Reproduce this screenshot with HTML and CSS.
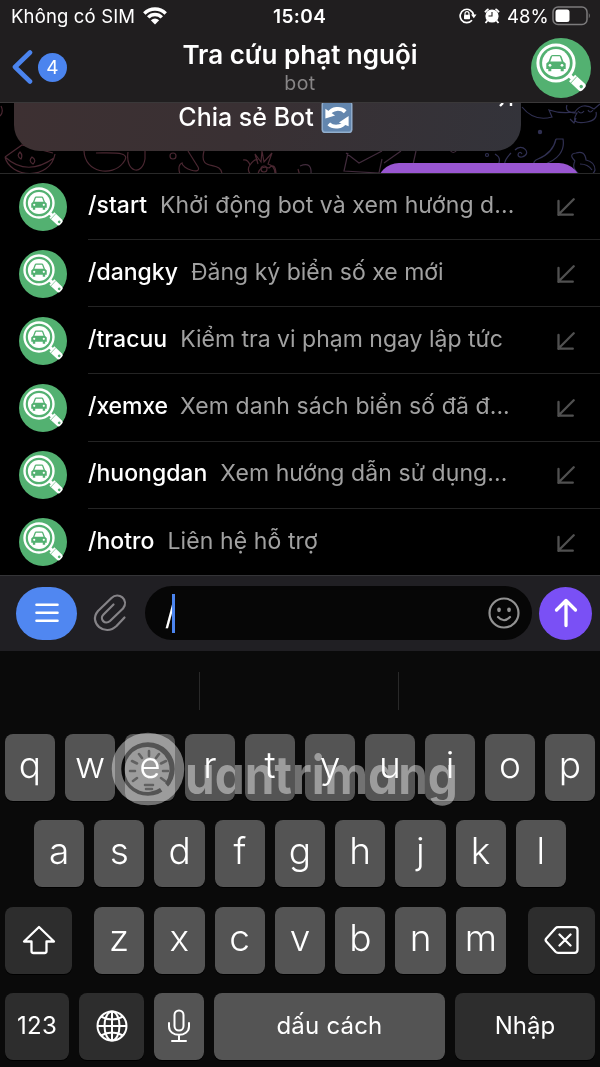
FILE: index.html
```html
<!DOCTYPE html>
<html lang="vi">
<head>
<meta charset="utf-8">
<title>Tra cứu phạt nguội</title>
<link rel="stylesheet" href="styles.css">
</head>
<body>
<svg class="defs" aria-hidden="true">
  <symbol id="logo" viewBox="0 0 60 60">
    <circle cx="30" cy="30" r="30" fill="#53b171"/>
    <g transform="rotate(43 25 25)">
      <rect x="43" y="23" width="6" height="4" fill="#fff"/>
      <path d="M47 20.500h13q3 0 3 3v3q0 3-3 3H47z" fill="#fff"/>
      <path d="M49.500 20.500v9" stroke="#53b171" stroke-width=".7"/>
      <circle cx="59.500" cy="25" r="1.700" fill="#53b171"/>
    </g>
    <circle cx="25" cy="25" r="18.100" fill="none" stroke="#fff" stroke-width="3"/>
    <circle cx="25" cy="25" r="13.900" fill="#fff"/>
    <path d="M15.300 25.500l2.300-2 1.900-5q.5-1.600 2-1.600h7q1.500 0 2 1.600l1.900 5 2.300 2v5.500h-2v2.300h-3V31h-9.400v2.300h-3V31h-2z" fill="#53b171"/>
    <path d="M19.300 23.500l1.900-5.200h7.600l1.900 5.200z" fill="#fff"/>
    <circle cx="19" cy="27.300" r="1.400" fill="#fff"/><circle cx="31" cy="27.300" r="1.400" fill="#fff"/>
  </symbol>
  <symbol id="insert" viewBox="0 0 18 18">
    <path d="M16.700 1.300L2 16M1.500 3v14M1.300 16.700h14.500" fill="none" stroke="#505050" stroke-width="2.300" stroke-linecap="round"/>
  </symbol>
</svg>

<header class="top">
  <div class="status">
    <span class="carrier">Không có SIM</span>
    <svg class="wifi" viewBox="0 0 24 18"><g fill="none" stroke="#fff" stroke-width="3.400"><path d="M1.300 6.500C7.300.5 16.700.5 22.700 6.500"/><path d="M5.200 10.400c3.800-3.800 9.800-3.800 13.600 0"/></g><path d="M7.800 13.200q4.200-3.200 8.400 0L12 17.500z" fill="#fff"/></svg>
    <span class="clock">15:04</span>
    <svg class="lock" viewBox="0 0 18 16"><g fill="none" stroke="#fff"><path d="M14.500 7A6.700 6.700 0 1 0 13 12.300" stroke-width="1.700"/><path d="M6 7V5.700a2 2 0 0 1 4 0V7" stroke-width="1.200"/></g><rect x="5" y="6.800" width="6" height="4.500" rx=".7" fill="#fff"/><path d="M12 6.500h5.500l-2.700 3.700z" fill="#fff"/></svg>
    <svg class="alarm" viewBox="0 0 16 16"><circle cx="8" cy="8" r="6.600" fill="#fff"/><path d="M3.500 12.500l-2 2.500M12.500 12.500l2 2.500M1 4.200A12 12 0 0 1 4.500 1M15 4.200A12 12 0 0 0 11.500 1" stroke="#fff" stroke-width="1.800" fill="none"/><path d="M8 4v4H4.500" stroke="#201e1f" stroke-width="1.100" fill="none"/></svg>
    <span class="percent">48%</span>
    <svg class="battery" viewBox="0 0 39 20"><rect x="1" y="1" width="34" height="17.500" rx="5" fill="none" stroke="#7c7b7c" stroke-width="1.500"/><rect x="3.500" y="3.500" width="14" height="12.500" rx="2.500" fill="#fff"/><path d="M36.800 7q2 2.700 0 5.500z" fill="#7c7b7c"/></svg>
  </div>
  <div class="nav">
    <svg class="back" viewBox="0 0 20 34"><path d="M17.500 2.500L2.500 17l15 14.500" fill="none" stroke="#4b84ee" stroke-width="4.600" stroke-linecap="round" stroke-linejoin="round"/></svg>
    <span class="count">4</span>
    <div class="heading">
      <h1>Tra cứu phạt nguội</h1>
      <p>bot</p>
    </div>
    <svg class="avatar-lg"><use href="#logo"/></svg>
  </div>
</header>

<section class="chat">
  <svg class="doodles" viewBox="0 0 600 70" fill="none" stroke-width="1.200">
    <g stroke="#4a2731">
      <path d="M0 13q4-4 1-10M5 54l17-12 31 8M5 54c5 21 45 24 50-3M5 54q22 20 49 1M20 49q3 3 1 7-5-3-1-7zM32 54q5 3 1 7-5-3-1-7zM84 48c1 22 28 26 39 12 10-12-10-10-27-10M128 49c-3 20 14 25 17 7v-9M188 48l10 16c4 8-16 2-16-4-4 2-3 8-2 11M204 48c-6 22 18 8 18 24M243 57q5-1 7 5 5-7 8-5M250 62q-4 5 2 11M258 61l-3-10 6 8 1-11 2 11 8-9-4 11q7 2 7 10M258 71q2-9 11-6 6-6 7 5M298 66l2 7"/>
      <circle cx="173" cy="53" r="3"/><circle cx="264" cy="66" r="3"/>
    </g>
    <g stroke="#412b3c"><path d="M300 63q12-5 11 8M348 50l-4 18 35 2 3-14M346 50l13 10 23-12M384 60l17-12M412 66l4-18M450 47q3 5 7 0"/></g>
    <g stroke="#303052">
      <path d="M522 4q12 15 30 10l-3-7q12 4 25 2M567 2q-3 8 10 8-8 12 10 9 11-2 9-10M574 10q8-12 20-4l6-5M578 8q3 4 6 0M588 7q2 4 5 0M570 16l4 4 2-5M515 47c7-8 18 4 7 7-7 1-3-8 0-3M556 36q-3 14-18 20c-8 3-3 10 4 6 17-5 23-15 21-26h-7M575 58q-7-7 1-8 9-3 10 7 9 2 9 10-3 9-16 4-8-6-4-13M580 61q8 0 12 6M495 51q7 4 3 11 8 6 9 8M511 50q-12 12-2 20"/>
      <circle cx="540" cy="29" r="1.600" fill="#303052"/><circle cx="487" cy="52" r="1.500"/>
    </g>
  </svg>
  <div class="share">Chia sẻ Bot
    <svg viewBox="0 0 32 32"><rect y="-2" width="32" height="33" rx="4" fill="#91aecd"/><rect x="1.500" y="-1" width="29" height="30.500" rx="3" fill="#6386ae"/><path d="M7.500 11a10.500 9 0 0 1 17-2M24.500 19.500a10.500 9 0 0 1-17 2" fill="none" stroke="#fff" stroke-width="4"/><path d="M4 6v10l10-3zM28 13.500v10.500l-10-4z" fill="#fff"/></svg>
    <svg class="open" viewBox="0 0 14 5"><path d="M4 0L1 3M12 0v3" stroke="#fff" stroke-width="2.400"/></svg>
  </div>
  <div class="bubble"></div>
</section>

<ul class="commands">
  <li><svg class="avatar"><use href="#logo"/></svg><div class="row"><b>/start</b><span class="s1">Khởi động bot và xem hướng d...</span><svg class="arrow"><use href="#insert"/></svg></div></li>
  <li><svg class="avatar"><use href="#logo"/></svg><div class="row"><b>/dangky</b><span>Đăng ký biển số xe mới</span><svg class="arrow"><use href="#insert"/></svg></div></li>
  <li><svg class="avatar"><use href="#logo"/></svg><div class="row"><b>/tracuu</b><span>Kiểm tra vi phạm ngay lập tức</span><svg class="arrow"><use href="#insert"/></svg></div></li>
  <li><svg class="avatar"><use href="#logo"/></svg><div class="row"><b class="tight">/xemxe</b><span class="s4">Xem danh sách biển số đã đ...</span><svg class="arrow"><use href="#insert"/></svg></div></li>
  <li><svg class="avatar"><use href="#logo"/></svg><div class="row"><b>/huongdan</b><span class="s1">Xem hướng dẫn sử dụng...</span><svg class="arrow"><use href="#insert"/></svg></div></li>
  <li><svg class="avatar"><use href="#logo"/></svg><div class="row"><b>/hotro</b><span class="s4">Liên hệ hỗ trợ</span><svg class="arrow"><use href="#insert"/></svg></div></li>
</ul>

<section class="composer">
  <div class="menu"><svg viewBox="0 0 24 20"><path d="M1.500 1.700h21M1.500 9.700h21M1.500 17.700h21" stroke="#fff" stroke-width="2.600" stroke-linecap="round"/></svg></div>
  <svg class="clip" viewBox="0 0 34 38"><path d="M31.500 23.500L23.500 32C12 43-5 29 5 17L18.500 4c7-7 18 2 11.500 10.500L17 27c-5 4.500-11-2-6.500-6.500L20.500 10.500" fill="none" stroke="#858387" stroke-width="2.200" stroke-linecap="round" stroke-linejoin="round"/></svg>
  <div class="field"><span class="typed">/</span><i class="caret"></i>
    <svg class="smile" viewBox="0 0 32 32"><g fill="none" stroke="#929292" stroke-width="2.200" stroke-linecap="round"><circle cx="16" cy="16" r="14.500"/><path d="M10 20q6 6.500 12 0"/></g><ellipse cx="11" cy="12.800" rx="1.900" ry="2.400" fill="#929292"/><ellipse cx="21" cy="12.800" rx="1.900" ry="2.400" fill="#929292"/></svg>
  </div>
  <div class="send"><svg viewBox="0 0 24 30"><path d="M12 27.500V2.500M2.500 12L12 2.500l9.500 9.500" fill="none" stroke="#fff" stroke-width="3.300" stroke-linecap="round" stroke-linejoin="round"/></svg></div>
</section>

<section class="keyboard">
  <div class="suggest"><i></i><i></i><i></i></div>
  <div class="keys">
    <div class="line"><kbd>q</kbd><kbd>w</kbd><kbd>e</kbd><kbd>r</kbd><kbd>t</kbd><kbd>y</kbd><kbd>u</kbd><kbd>i</kbd><kbd>o</kbd><kbd>p</kbd></div>
    <div class="line mid"><kbd>a</kbd><kbd>s</kbd><kbd>d</kbd><kbd>f</kbd><kbd>g</kbd><kbd>h</kbd><kbd>j</kbd><kbd>k</kbd><kbd>l</kbd></div>
    <div class="line low">
      <kbd class="dark"><svg width="34" height="30" viewBox="0 0 34 30"><path d="M17 2L2 16.500h7.500V26q0 2 2 2h11q2 0 2-2v-9.500H32z" fill="none" stroke="#fff" stroke-width="2.300" stroke-linejoin="round"/></svg></kbd>
      <div class="letters"><kbd>z</kbd><kbd>x</kbd><kbd>c</kbd><kbd>v</kbd><kbd>b</kbd><kbd>n</kbd><kbd>m</kbd></div>
      <kbd class="dark"><svg width="35" height="30" viewBox="0 0 35 30"><path d="M14 2.200h16.500q3 0 3 3v19.600q0 3-3 3H14q-1.500 0-2.500-1L2.300 16.500q-1.300-1.500 0-3l9.200-10.300q1-1 2.500-1zM15.500 9.500l11 11M26.500 9.500l-11 11" fill="none" stroke="#fff" stroke-width="2.300" stroke-linecap="round"/></svg></kbd>
    </div>
    <div class="line bottom">
      <kbd class="dark word num">123</kbd>
      <kbd class="dark"><svg width="32" height="32" viewBox="0 0 32 32" fill="none" stroke="#fff" stroke-width="2"><circle cx="16" cy="16" r="14.500"/><ellipse cx="16" cy="16" rx="7.500" ry="14.500"/><path d="M16 1.500v29M1.500 16h29M5 6.500q11 6 22 0M5 25.500q11-6 22 0"/></svg></kbd>
      <kbd><svg width="24" height="34" viewBox="0 0 24 34" fill="none" stroke="#fff" stroke-width="2" stroke-linecap="round"><rect x="7.500" y="1.500" width="9" height="20" rx="4.500"/><path d="M2 14v3.500c0 11 20 11 20 0V14M12 26v6M5 32h14"/></svg></kbd>
      <kbd class="word space">dấu cách</kbd>
      <kbd class="dark word enter">Nhập</kbd>
    </div>
  </div>
  <svg class="watermark" viewBox="0 0 360 90">
    <circle cx="38" cy="42" r="31.500" fill="none" stroke="#6c6c6c" stroke-width="9.500"/>
    <path d="M38 20a22.500 22.500 0 1 0 12 41q2 4 5 6l5-5-5-6A22.500 22.500 0 0 0 38 20z" fill="#6c6c6c"/>
    <g stroke="#141414" stroke-width="2.600" stroke-linecap="round"><path d="M39 24v5M29 27l3 4M49 27l-3 4M22 34l5 2.500M56 34l-5 2.500M20 44h5M58 44h-5M23 54l4-3M55 54l-4-3M35 58h8M36 62h6"/></g>
    <text class="brand" x="75" y="67" textLength="273" lengthAdjust="spacingAndGlyphs">uantrimang</text>
  </svg>
</section>
</body>
</html>
```

FILE: styles.css
```css
* { box-sizing: border-box; }
body { margin: 0; width: 600px; height: 1067px; overflow: hidden; background: #000; color: #fff; font-family: Inter, "Noto Sans", sans-serif; }
svg { display: block; flex: none; }
.defs { position: absolute; width: 0; height: 0; }
h1, p, ul { margin: 0; padding: 0; }

.top { height: 103px; background: #201e1f; border-bottom: 1px solid #3a3839; }
.status { display: flex; align-items: center; height: 32px; padding: 0 5px 0 11px; font-size: 18.500px; line-height: 32px; white-space: nowrap; }
.carrier { width: 125px; letter-spacing: .15px; }
.wifi { width: 24px; height: 18px; margin-left: 7px; }
.clock { width: 54px; margin: 2px 0 0 106px; font-weight: 600; font-size: 19px; letter-spacing: .4px; }
.lock { width: 18px; height: 16px; margin-left: 132px; }
.alarm { width: 16px; height: 16px; margin-left: 7px; }
.percent { width: 42px; margin-left: 7px; }
.battery { width: 39px; height: 20px; margin-left: 3px; }
.nav { display: flex; height: 70px; padding: 0 9px 0 12px; }
.back { width: 21px; height: 34px; margin-top: 18px; }
.count { width: 29px; height: 29px; margin: 21px 0 0 5px; border-radius: 50%; background: #4b84ee; text-align: center; font-size: 19px; line-height: 29px; }
.heading { flex: 1; padding-left: 2px; text-align: center; }
.heading h1 { height: 40px; font-size: 26px; line-height: 46px; font-weight: 600; }
.heading p { font-size: 19.500px; line-height: 22px; color: #878586; letter-spacing: .5px; }
.avatar-lg { width: 60px; height: 60px; margin-top: 6px; }

.chat { position: relative; height: 71px; overflow: hidden; border-bottom: 1px solid #292929; }
.doodles { position: absolute; left: 0; top: 0; width: 600px; height: 70px; }
.share { position: relative; display: flex; justify-content: center; width: 507px; height: 48px; margin-left: 14px; padding: 0 4px 0 0; gap: 7px; border-radius: 0 0 26px 26px; background: linear-gradient(100deg, #3d3032, #393033 45%, #33333a); font-size: 25px; line-height: 28px; font-weight: 500; }
.share svg { width: 32px; height: 31px; }
.share .open { position: absolute; right: 8px; top: 0; width: 14px; height: 5px; }
.bubble { position: relative; width: 204px; height: 44px; margin: 12px 0 0 377px; border-radius: 22px; background: #9956d1; }

.commands { list-style: none; height: 401px; }
.commands li { display: flex; height: 67.200px; padding-left: 19px; align-items: center; }
.commands li:first-child { height: 66px; }
.avatar { width: 48px; height: 48px; margin-right: 21px; }
.row { flex: 1; display: flex; align-items: center; height: 100%; padding: 0 24px 3px 0; border-bottom: 1px solid #242424; white-space: nowrap; }
li:last-child .row { border: 0; }
.row b { margin-right: 13px; font-weight: 500; font-size: 23px; }
.row .tight { margin-right: 12px; letter-spacing: -.1px; }
.row span { font-size: 23px; color: #a1a1a1; }
.row .s1 { letter-spacing: .08px; }
.row .s4 { letter-spacing: .1px; }
.arrow { width: 18px; height: 18px; margin: 4px 1px 0 auto; }

.composer { display: flex; align-items: center; height: 76px; padding: 0 8px 1px 16px; border-top: 1px solid #343437; background: #201f23; }
.menu { display: flex; align-items: center; justify-content: center; width: 61px; height: 53px; padding-left: 1px; border-radius: 27px; background: #5087f1; }
.menu svg { width: 24px; height: 20px; }
.clip { width: 34px; height: 38px; margin-left: 16px; }
.field { display: flex; align-items: center; width: 387px; height: 54px; margin: 0 7px 0 18px; padding: 0 12px 0 20px; border-radius: 27px; background: #060606; }
.typed { width: 7px; padding-top: 3px; font-size: 29px; }
.caret { position: relative; width: 3px; height: 39px; background: #4b84ee; }
.smile { width: 32px; height: 32px; margin-left: auto; }
.send { display: flex; align-items: center; justify-content: center; width: 53px; height: 53px; border-radius: 50%; background: #7a50f5; }
.send svg { width: 24px; height: 30px; }

.keyboard { position: relative; height: 416px; background: #0a0a0a; }
.suggest { display: flex; height: 83px; padding-top: 21px; }
.suggest i { width: 199.500px; height: 38px; border-right: 1px solid #292929; }
.suggest i:last-child { border: 0; }
.keys { display: flex; flex-direction: column; gap: 19.300px; padding: 0 5px; }
.line { display: flex; height: 67px; gap: 10px; }
.mid { padding: 0 29px; }
.low { justify-content: space-between; }
.low .dark { flex: 0 0 67px; }
.letters { display: flex; gap: 10px; width: 412px; }
kbd { flex: 1; display: flex; align-items: center; justify-content: center; min-width: 0; border-radius: 8px; background: #545454; box-shadow: 0 1px #000; font: 300 37px/60px Inter, sans-serif; padding-bottom: 5px; }
.dark { background: #2d2d2d; }
kbd:has(svg) { padding-bottom: 0; }
kbd.word { font-size: 24px; font-weight: 400; padding-bottom: 0; }
.bottom kbd { flex: 0 0 50px; }
.bottom kbd.dark { flex-basis: 65px; }
.bottom kbd.num { flex-basis: 64px; letter-spacing: .3px; }
.bottom kbd.space { flex-basis: 231px; letter-spacing: .2px; }
.bottom kbd.enter { flex-basis: 140px; }
.watermark { position: absolute; left: 110px; top: 76px; width: 360px; height: 90px; mix-blend-mode: screen; }
.brand { font: 700 53px Inter, sans-serif; font-feature-settings: "cv11" 1; fill: #6c6c6c; }
```
